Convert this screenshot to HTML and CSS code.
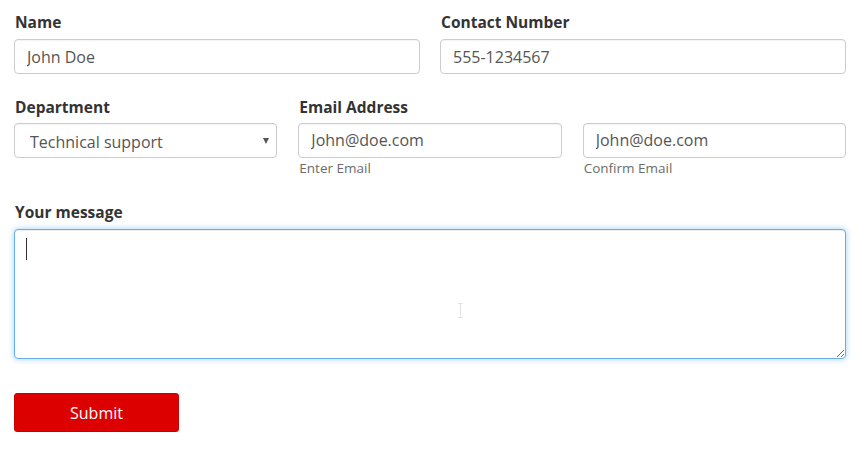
FILE: index.html
```html
<!DOCTYPE html>
<html>
<head>
<meta charset="utf-8">
<link rel="stylesheet" href="styles.css">
</head>
<body>
<form class="form">
  <div class="row two">
    <div class="field">
      <label class="label">Name</label>
      <input class="control" type="text" value="John Doe">
    </div>
    <div class="field">
      <label class="label">Contact Number</label>
      <input class="control" type="text" value="555-1234567">
    </div>
  </div>
  <div class="row three">
    <div class="field">
      <label class="label">Department</label>
      <div class="select-wrap">
        <select class="control select">
          <option>Technical support</option>
        </select>
      </div>
    </div>
    <div class="field">
      <label class="label">Email Address</label>
      <input class="control email" type="text" value="John@doe.com">
      <span class="help">Enter Email</span>
    </div>
    <div class="field">
      <label class="label label-empty">&nbsp;</label>
      <input class="control email" type="text" value="John@doe.com">
      <span class="help">Confirm Email</span>
    </div>
  </div>
  <div class="row msg">
    <label class="label">Your message</label>
    <div class="area-wrap">
      <textarea class="control area"></textarea>
      <span class="caret"></span>
      <span class="ibeam"></span>
    </div>
  </div>
  <button class="submit" type="button">Submit</button>
</form>
</body>
</html>
```
FILE: styles.css
```css
* { box-sizing: border-box; }
html, body { margin: 0; padding: 0; background: #fff; }
body {
  font-family: "Open Sans", "Liberation Sans", sans-serif;
  color: #333;
}
.form {
  width: 832px;
  margin-left: 14px;
  padding-top: 12px;
  display: flex;
  flex-direction: column;
}
.row { display: grid; }
.row.two { grid-template-columns: 1fr 1fr; column-gap: 20px; }
.row.three { grid-template-columns: 1fr 1fr 1fr; column-gap: 21px; margin-top: 23px; }
.row.three .label { margin-bottom: 6px; }
.row.msg { display: flex; flex-direction: column; margin-top: 25px; }
.field { display: flex; flex-direction: column; }
.label {
  font-size: 15.5px;
  font-weight: 700;
  line-height: 20px;
  height: 20px;
  margin-bottom: 7px;
  color: #333;
  display: block;
  margin-left: 1px;
}
.control {
  height: 35px;
  width: 100%;
  border: 1px solid #ccc;
  border-radius: 4px;
  padding: 0 12px;
  font-family: "Open Sans", "Liberation Sans", sans-serif;
  font-size: 16px;
  color: #555;
  background: #fff;
  box-shadow: inset 0 1px 1px rgba(0,0,0,0.05);
  outline: none;
  margin: 0;
}
.email { padding-bottom: 2px; }
.select-wrap { position: relative; }
.select {
  -webkit-appearance: none;
  appearance: none;
  padding-left: 15px;
  padding-top: 3px;
}
.select-wrap::after {
  content: "";
  position: absolute;
  right: 8px;
  top: 15px;
  border-left: 3.5px solid transparent;
  border-right: 3.5px solid transparent;
  border-top: 6px solid #555;
  pointer-events: none;
}
.help {
  font-size: 13.5px;
  line-height: 18px;
  color: #6b6b6b;
  margin-top: 1px;
  margin-left: 1px;
}
.area-wrap { position: relative; }
.area {
  height: 130px;
  display: block;
  resize: vertical;
  border-color: #66afe9;
  box-shadow: inset 0 1px 1px rgba(0,0,0,0.075), 0 0 6px rgba(102,175,233,0.6);
  padding: 6px 12px;
}
.caret {
  position: absolute;
  left: 12px;
  top: 9px;
  width: 1px;
  height: 22px;
  background: #333;
}
.ibeam {
  position: absolute;
  left: 446px;
  top: 74px;
  width: 1px;
  height: 15px;
  background: #e2e2e2;
}
.ibeam::before, .ibeam::after {
  content: "";
  position: absolute;
  left: -2px;
  width: 5px;
  height: 1px;
  background: #e2e2e2;
}
.ibeam::before { top: 0; }
.ibeam::after { bottom: 0; }
.submit {
  margin-top: 34px;
  width: 165px;
  height: 39px;
  background: #dd0000;
  color: #fff;
  border: 1px solid #c80000;
  border-radius: 3px;
  font-family: "Open Sans", "Liberation Sans", sans-serif;
  font-size: 16px;
  padding: 0;
  align-self: flex-start;
}
```
